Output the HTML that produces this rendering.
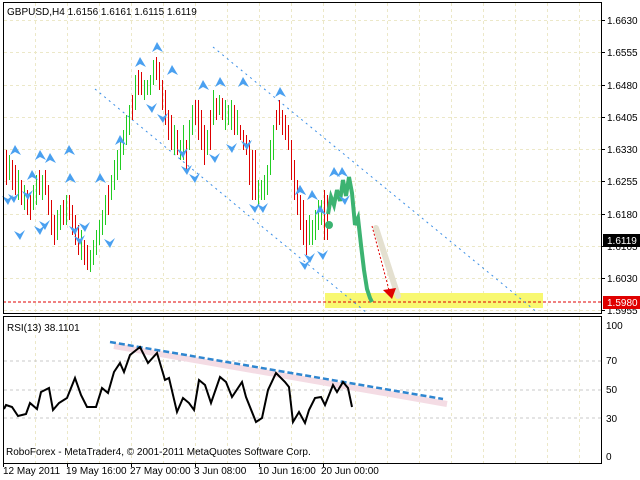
<!DOCTYPE html>
<html><head><meta charset="utf-8"><style>
html,body{margin:0;padding:0;background:#fff;width:640px;height:480px;overflow:hidden}
svg{display:block;font-family:"Liberation Sans",sans-serif;font-size:10px}
</style></head><body>
<svg width="640" height="480" viewBox="0 0 640 480" xmlns="http://www.w3.org/2000/svg">
<rect width="640" height="480" fill="#fff"/>
<g stroke="#ece8c8" stroke-dasharray="3,3">
<line x1="4" y1="20.5" x2="601" y2="20.5"/><line x1="4" y1="52.5" x2="601" y2="52.5"/><line x1="4" y1="85.5" x2="601" y2="85.5"/><line x1="4" y1="117.5" x2="601" y2="117.5"/><line x1="4" y1="149.5" x2="601" y2="149.5"/><line x1="4" y1="181.5" x2="601" y2="181.5"/><line x1="4" y1="214.5" x2="601" y2="214.5"/><line x1="4" y1="246.5" x2="601" y2="246.5"/><line x1="4" y1="278.5" x2="601" y2="278.5"/><line x1="4" y1="310.5" x2="601" y2="310.5"/>
<path d="M35.5 3V313M67.5 3V313M99.5 3V313M131.5 3V313M163.5 3V313M195.5 3V313M227.5 3V313M259.5 3V313M291.5 3V313M323.5 3V313M355.5 3V313M387.5 3V313M419.5 3V313M451.5 3V313M483.5 3V313M515.5 3V313M547.5 3V313M579.5 3V313"/>
<path d="M35.5 317V463M67.5 317V463M99.5 317V463M131.5 317V463M163.5 317V463M195.5 317V463M227.5 317V463M259.5 317V463M291.5 317V463M323.5 317V463M355.5 317V463M387.5 317V463M419.5 317V463M451.5 317V463M483.5 317V463M515.5 317V463M547.5 317V463M579.5 317V463"/>
</g>
<rect x="325" y="293" width="218" height="15" fill="#f8f870"/>
<line x1="3" y1="302" x2="602" y2="302" stroke="#e00000" stroke-dasharray="3,2"/>
<line x1="213" y1="47" x2="538" y2="313" stroke="#3a8ee6" stroke-dasharray="2,4"/>
<line x1="95" y1="89" x2="367" y2="313" stroke="#3a8ee6" stroke-dasharray="2,4"/>
<path fill="none" stroke="#dd0000" stroke-width="1" d="M6.5 150V185M12.5 160V190M15.5 165V195M21.5 180V205M27.5 190V215M30.5 195V220M39.5 170V195M45.5 170V195M48.5 185V215M51.5 200V235M54.5 215V245M63.5 200V225M69.5 195V220M72.5 205V235M75.5 215V245M78.5 225V255M84.5 240V265M87.5 245V270M108.5 185V215M132.5 95V120M138.5 70V95M141.5 72V95M156.5 57V80M159.5 62V90M162.5 80V110M165.5 90V125M168.5 110V140M171.5 115V150M177.5 130V155M186.5 140V170M195.5 100V125M198.5 100V140M201.5 110V150M204.5 125V165M210.5 110V150M216.5 98V120M222.5 98V120M234.5 105V135M240.5 125V140M243.5 130V150M246.5 135V155M249.5 140V185M252.5 150V200M255.5 150V200M276.5 110V130M279.5 100V125M282.5 110V135M285.5 115V140M288.5 125V150M291.5 140V180M294.5 160V200M297.5 180V215M300.5 195V230M303.5 200V245M306.5 220V255M324.5 190V240M327.5 195V240"/>
<path fill="none" stroke="#22cc22" stroke-width="1" d="M9.5 155V180M18.5 170V200M24.5 185V210M33.5 185V210M36.5 175V205M42.5 175V200M57.5 210V240M60.5 205V230M66.5 195V225M81.5 230V260M90.5 250V272M93.5 240V265M96.5 230V255M99.5 220V245M102.5 210V235M105.5 195V225M111.5 175V200M114.5 160V190M117.5 150V180M120.5 140V170M123.5 130V155M126.5 115V145M129.5 105V135M135.5 75V110M144.5 80V100M147.5 80V95M150.5 75V95M153.5 60V85M174.5 125V155M180.5 140V160M183.5 125V160M189.5 120V150M192.5 105V135M207.5 130V155M213.5 90V125M219.5 95V115M225.5 100V130M228.5 105V125M231.5 100V130M237.5 110V135M258.5 180V205M261.5 180V200M264.5 175V200M267.5 165V195M270.5 140V175M273.5 125V160M309.5 215V245M312.5 220V245M315.5 210V240M318.5 200V230M321.5 200V225"/>
<polyline fill="none" stroke="#3cb371" stroke-width="4" points="328,214 331,197 334,205 337,190 340,201 343,180 346,196 349,177 352,193 355,225 358,218 361,245 364,270 367,289 370,298 372,302"/>
<g fill="#4aa0f0">
<g id="u"><polygon transform="translate(157,47)" points="-5,5 0,-5 6,5 0,2"/><polygon transform="translate(140,62)" points="-5,5 0,-5 6,5 0,2"/><polygon transform="translate(172,70)" points="-5,5 0,-5 6,5 0,2"/><polygon transform="translate(203,85)" points="-5,5 0,-5 6,5 0,2"/><polygon transform="translate(220,82)" points="-5,5 0,-5 6,5 0,2"/><polygon transform="translate(243,82)" points="-5,5 0,-5 6,5 0,2"/><polygon transform="translate(280,92)" points="-5,5 0,-5 6,5 0,2"/><polygon transform="translate(15,150)" points="-5,5 0,-5 6,5 0,2"/><polygon transform="translate(40,155)" points="-5,5 0,-5 6,5 0,2"/><polygon transform="translate(50,158)" points="-5,5 0,-5 6,5 0,2"/><polygon transform="translate(32,175)" points="-5,5 0,-5 6,5 0,2"/><polygon transform="translate(70,178)" points="-5,5 0,-5 6,5 0,2"/><polygon transform="translate(120,140)" points="-5,5 0,-5 6,5 0,2"/><polygon transform="translate(100,178)" points="-5,5 0,-5 6,5 0,2"/><polygon transform="translate(300,190)" points="-5,5 0,-5 6,5 0,2"/><polygon transform="translate(334,172)" points="-5,5 0,-5 6,5 0,2"/><polygon transform="translate(342,172)" points="-5,5 0,-5 6,5 0,2"/><polygon transform="translate(300,190)" points="-5,5 0,-5 6,5 0,2"/><polygon transform="translate(320,210)" points="-5,5 0,-5 6,5 0,2"/><polygon transform="translate(69,150)" points="-5,5 0,-5 6,5 0,2"/><polygon transform="translate(312,195)" points="-5,5 0,-5 6,5 0,2"/></g>
<polygon transform="translate(152,108)" points="-6,-4 0,-1 5,-5 0,5"/><polygon transform="translate(163,118)" points="-6,-4 0,-1 5,-5 0,5"/><polygon transform="translate(183,153)" points="-6,-4 0,-1 5,-5 0,5"/><polygon transform="translate(215,158)" points="-6,-4 0,-1 5,-5 0,5"/><polygon transform="translate(232,148)" points="-6,-4 0,-1 5,-5 0,5"/><polygon transform="translate(247,145)" points="-6,-4 0,-1 5,-5 0,5"/><polygon transform="translate(255,208)" points="-6,-4 0,-1 5,-5 0,5"/><polygon transform="translate(263,208)" points="-6,-4 0,-1 5,-5 0,5"/><polygon transform="translate(8,200)" points="-6,-4 0,-1 5,-5 0,5"/><polygon transform="translate(14,198)" points="-6,-4 0,-1 5,-5 0,5"/><polygon transform="translate(20,235)" points="-6,-4 0,-1 5,-5 0,5"/><polygon transform="translate(45,225)" points="-6,-4 0,-1 5,-5 0,5"/><polygon transform="translate(80,240)" points="-6,-4 0,-1 5,-5 0,5"/><polygon transform="translate(110,243)" points="-6,-4 0,-1 5,-5 0,5"/><polygon transform="translate(187,170)" points="-6,-4 0,-1 5,-5 0,5"/><polygon transform="translate(195,178)" points="-6,-4 0,-1 5,-5 0,5"/><polygon transform="translate(310,258)" points="-6,-4 0,-1 5,-5 0,5"/><polygon transform="translate(305,265)" points="-6,-4 0,-1 5,-5 0,5"/><polygon transform="translate(323,255)" points="-6,-4 0,-1 5,-5 0,5"/><polygon transform="translate(85,227)" points="-6,-4 0,-1 5,-5 0,5"/><polygon transform="translate(40,230)" points="-6,-4 0,-1 5,-5 0,5"/><polygon transform="translate(75,230)" points="-6,-4 0,-1 5,-5 0,5"/><polygon transform="translate(345,200)" points="-6,-4 0,-1 5,-5 0,5"/><polygon transform="translate(28,195)" points="-6,-4 0,-1 5,-5 0,5"/>
</g>
<line x1="376" y1="228" x2="398" y2="296" stroke="#e4e0d0" stroke-width="6" stroke-linecap="round"/>
<line x1="372" y1="226" x2="389" y2="290" stroke="#e00000" stroke-dasharray="2,2"/>
<polygon points="383,290 396,288 392,299" fill="#e00000"/>
<circle cx="329" cy="225" r="4" fill="#3cb371"/>
<rect x="3.5" y="2.5" width="598" height="311" fill="none" stroke="#000"/>
<rect x="3.5" y="316.5" width="598" height="147" fill="none" stroke="#000"/>
<text x="7" y="15" fill="#000">GBPUSD,H4  1.6156 1.6161 1.6115 1.6119</text>
<g fill="#000">
<text x="607" y="24">1.6630</text><text x="607" y="56">1.6555</text><text x="607" y="89">1.6480</text><text x="607" y="121">1.6405</text><text x="607" y="153">1.6330</text><text x="607" y="185">1.6255</text><text x="607" y="218">1.6180</text><text x="607" y="250">1.6105</text><text x="607" y="282">1.6030</text><text x="607" y="314">1.5955</text>
</g>
<rect x="603" y="234" width="37" height="13" fill="#000"/>
<text x="607" y="244" fill="#fff">1.6119</text>
<rect x="603" y="296" width="37" height="13" fill="#e00000"/>
<text x="607" y="306" fill="#fff">1.5980</text>
<g stroke="#c8c8c8" stroke-dasharray="3,3">
<line x1="4" y1="361" x2="601" y2="361"/><line x1="4" y1="390" x2="601" y2="390"/><line x1="4" y1="418" x2="601" y2="418"/>
</g>
<line x1="114" y1="346" x2="447" y2="404" stroke="#f4dce4" stroke-width="6"/>
<line x1="110" y1="342" x2="443" y2="399" stroke="#2f86d0" stroke-width="2.5" stroke-dasharray="6,3"/>
<polyline fill="none" stroke="#000" stroke-width="2" points="4,409 6,405 12,407 18,416 26,414 30,403 37,409 41,392 49,388 53,410 59,403 67,398 75,378 81,395 87,407 96,407 102,388 108,393 114,372 120,363 124,372 130,355 140,347 148,363 157,353 165,380 169,378 177,412 183,398 189,403 194,410 199,380 205,385 211,403 220,377 226,382 232,397 242,382 246,397 256,422 262,418 268,390 276,373 285,382 289,387 293,422 299,412 305,423 309,410 315,398 321,397 325,405 333,385 337,392 343,382 348,388 352,407"/>
<text x="7" y="331" fill="#000">RSI(13) 38.1101</text>
<text x="6" y="455" fill="#000">RoboForex - MetaTrader4, © 2001-2011 MetaQuotes Software Corp.</text>
<g fill="#000">
<text x="606" y="329">100</text><text x="606" y="364">70</text><text x="606" y="393">50</text><text x="606" y="422">30</text><text x="606" y="460">0</text>
<text x="3" y="474">12 May 2011</text><text x="66" y="474">19 May 16:00</text><text x="130" y="474">27 May 00:00</text><text x="194" y="474">3 Jun 08:00</text><text x="258" y="474">10 Jun 16:00</text><text x="321" y="474">20 Jun 00:00</text>
</g>
<path stroke="#000" d="M602 20.5h3M602 52.5h3M602 85.5h3M602 117.5h3M602 149.5h3M602 181.5h3M602 214.5h3M602 246.5h3M602 278.5h3M602 310.5h3M3.5 463v4M67.5 463v4M131.5 463v4M195.5 463v4M259.5 463v4M323.5 463v4"/>
</svg>
</body></html>
